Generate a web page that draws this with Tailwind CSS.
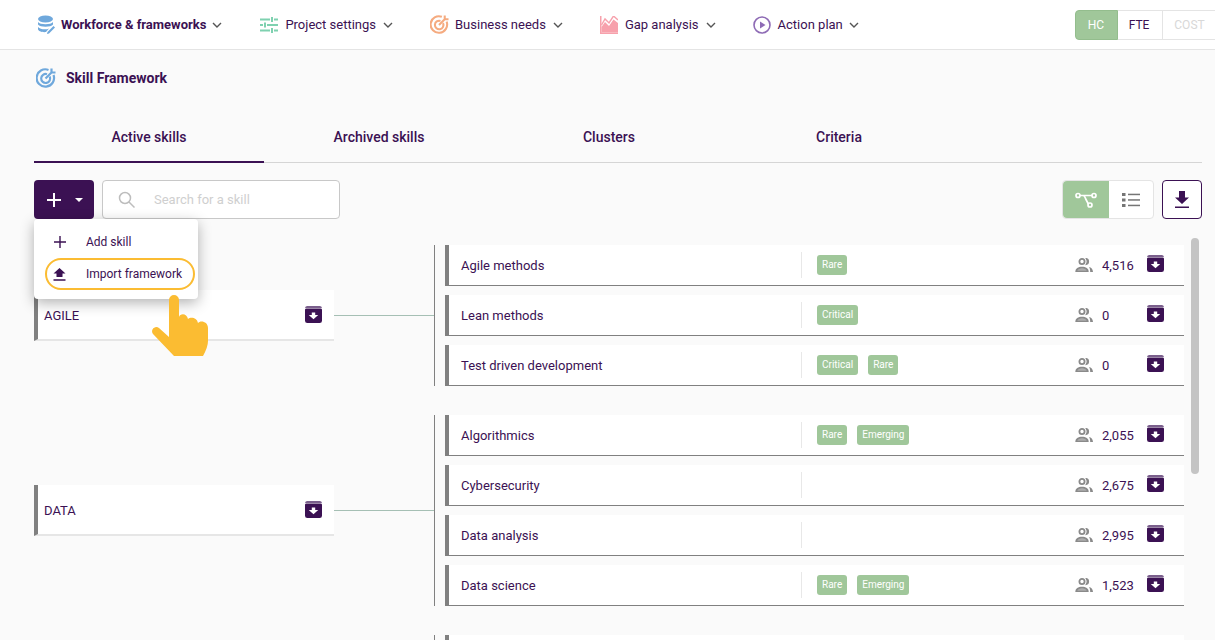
<!DOCTYPE html>
<html lang="en">

<head>
    <meta charset="UTF-8">
    <meta name="viewport" content="width=device-width, initial-scale=1.0">
    <script src="https://cdn.jsdelivr.net/npm/@tailwindcss/browser@4"></script>
    <title>Skill Framework</title>
</head>

<body class="relative h-[640px] overflow-hidden bg-[#fafafa] font-['Roboto',sans-serif] text-[13px] text-[#3b1153]">
    <!-- shared icons -->
    <svg class="hidden">
        <symbol id="archive" viewBox="0 0 18 18">
            <path d="M2.500 0h13A2.500 2.500 0 0 1 18 2H0A2.500 2.500 0 0 1 2.500 0z" fill="#7a5f8c" />
            <path d="M1.500 2.600h15A1.500 1.500 0 0 1 18 4.100V15.500a2.500 2.500 0 0 1-2.500 2.500h-13A2.500 2.500 0 0 1 0 15.500V4.100A1.500 1.500 0 0 1 1.500 2.600z" fill="#3b1153" />
            <path d="M7.200 7h3.600v2.500H14l-5 4.500-5-4.500h3.200z" fill="#fff" />
        </symbol>
        <symbol id="people" viewBox="0 0 18 14">
            <circle cx="7" cy="3.500" r="2.600" fill="none" stroke="#8a8a8a" stroke-width="1.800" />
            <path d="M11.300 .6c2.900.5 2.900 5.300 0 5.800 1.100-1.800 1.100-4 0-5.800z" fill="#8a8a8a" stroke="#8a8a8a" stroke-width="1.200" />
            <path d="M.3 14c0-3.800 3-5.200 6.700-5.200s6.700 1.400 6.700 5.200z" fill="#8a8a8a" />
            <path d="M2.300 12.800c.4-1.800 2.400-2.600 4.700-2.600s4.300.8 4.700 2.600z" fill="#fff" fill-opacity=".3" />
            <path d="M14 9c2.200.4 3.800 1.900 4 5h-2.800c0-2-.3-3.700-1.200-5z" fill="#8a8a8a" />
        </symbol>
        <symbol id="chevron" viewBox="0 0 10 6">
            <path d="M1 1l4 4 4-4" fill="none" stroke="#555" stroke-width="1.400" />
        </symbol>
    </svg>

    <!-- nav -->
    <nav class="flex h-[50px] items-center border-b border-[#e4e4e4] bg-white pl-[37px]">
        <div class="flex items-center">
            <svg class="h-[20px] w-[18px]" viewBox="0 0 18 20">
                <ellipse cx="8.500" cy="4" rx="7.500" ry="3.500" fill="#6fa8dc" />
                <path d="M1 7c2 3 13 3 15 0v2.500c-2 3-13 3-15 0z" fill="#6fa8dc" />
                <path d="M1 12c2 2.500 8 3 11 1.500l-3 3.500c-3 .5-8-.5-8-3z" fill="#6fa8dc" />
                <path d="M10.500 17l6-6 1.500 1.500-6 6-2 .5z" fill="#6fa8dc" />
            </svg>
            <span class="ml-[6px] font-bold">Workforce &amp; frameworks</span>
            <svg class="ml-[6px] h-[6px] w-[10px]"><use href="#chevron" /></svg>
        </div>
        <div class="ml-[38px] flex items-center">
            <svg class="h-[18px] w-[18px]" viewBox="0 0 18 18" fill="none" stroke="#7fd1b0" stroke-width="2">
                <path d="M0 3.500h10M14 3.500h4M12 1v5M0 9h3M7 9h11M5 6.500v5M0 14.500h10M14 14.500h4M12 12v5" />
            </svg>
            <span class="ml-[7px]">Project settings</span>
            <svg class="ml-[7px] h-[6px] w-[10px]"><use href="#chevron" /></svg>
        </div>
        <div class="ml-[37px] flex items-center">
            <svg class="h-[19px] w-[19px]" viewBox="0 0 20 20" fill="none" stroke="#f5ab80" stroke-width="2.200">
                <path d="M17.500 7A8.700 8.700 0 1 1 12.500 1.900" />
                <path d="M13.700 8.500A4.500 4.500 0 1 1 11 6.200" />
                <path d="M9.500 10.500L16 4M15.500 .5v4h4" />
            </svg>
            <span class="ml-[6px]">Business needs</span>
            <svg class="ml-[7px] h-[6px] w-[10px]"><use href="#chevron" /></svg>
        </div>
        <div class="ml-[37px] flex items-center">
            <svg class="h-[18px] w-[18px]" viewBox="0 0 18 18">
                <path d="M0 0h1.500v16.500H18V18H0z" fill="#f7a1ac" />
                <path d="M1.500 16.500V11L5 6l4 4 4.500-6.500L18 7v9.500z" fill="#f7a1ac" />
                <path d="M1.500 9L5 3l4 4 4.500-7L18 4" fill="none" stroke="#f7a1ac" stroke-width="1.400" />
            </svg>
            <span class="ml-[7px]">Gap analysis</span>
            <svg class="ml-[7px] h-[6px] w-[10px]"><use href="#chevron" /></svg>
        </div>
        <div class="ml-[37px] flex items-center">
            <svg class="h-[18px] w-[18px]" viewBox="0 0 18 18">
                <circle cx="9" cy="9" r="8" fill="none" stroke="#8e6bb5" stroke-width="1.600" />
                <path d="M7 5.500L12.500 9 7 12.500z" fill="#8e6bb5" />
            </svg>
            <span class="ml-[7px]">Action plan</span>
            <svg class="ml-[6px] h-[6px] w-[10px]"><use href="#chevron" /></svg>
        </div>
        <div class="ml-auto flex h-[30px] text-[12px]">
            <div class="flex w-[43px] items-center justify-center rounded-l-[4px] border border-[#93bd8d] bg-[#a0c79a] pr-[1px] text-white">HC</div>
            <div class="flex w-[44px] items-center justify-center border-y border-[#e4e4e4] pr-[2px]">FTE</div>
            <div class="flex w-[53px] items-center justify-center border-y border-l border-[#e4e4e4] pl-[1px] text-[#d8d8d8]">COST</div>
        </div>
    </nav>

    <main class="pl-[34px] pr-[13px]">
        <!-- title -->
        <div class="flex h-[56px] items-center pl-[2px]">
            <svg class="h-[20px] w-[20px]" viewBox="0 0 20 20" fill="none" stroke="#6fa8dc" stroke-width="2.200">
                <path d="M17.500 7A8.700 8.700 0 1 1 12.500 1.900" />
                <path d="M13.700 8.500A4.500 4.500 0 1 1 11 6.200" />
                <path d="M9.500 10.500L16 4M15.500 .5v4h4" />
            </svg>
            <h1 class="ml-[10px] text-[14px] font-bold">Skill Framework</h1>
        </div>

        <!-- tabs -->
        <div class="mt-[7px] flex h-[50px] border-b border-[#d5d5d5] text-[14px] font-medium">
            <div class="flex h-[50px] w-[230px] items-center justify-center border-b-2 border-[#3b1153]">Active skills</div>
            <div class="flex h-[49px] w-[230px] items-center justify-center">Archived skills</div>
            <div class="flex h-[49px] w-[230px] items-center justify-center">Clusters</div>
            <div class="flex h-[49px] w-[230px] items-center justify-center">Criteria</div>
        </div>

        <!-- toolbar -->
        <div class="mt-[17px] flex h-[39px]">
            <button class="flex w-[60px] items-center rounded-[4px] bg-[#3b1153] pl-[12px]">
                <svg class="h-[16px] w-[16px]" viewBox="0 0 16 16"><path d="M7 1h2v6h6v2H9v6H7V9H1V7h6z" fill="#fff" /></svg>
                <svg class="ml-[13px] h-[4px] w-[8px]" viewBox="0 0 8 4"><path d="M0 0h8L4 4z" fill="#fff" /></svg>
            </button>
            <div class="ml-[8px] flex w-[238px] items-center rounded-[4px] border border-[#c8c8c8] bg-white pl-[15px]">
                <svg class="h-[17px] w-[17px]" viewBox="0 0 17 17" fill="none" stroke="#bdbdbd" stroke-width="1.500">
                    <circle cx="7" cy="7" r="5.500" /><path d="M11 11l5.500 5.500" />
                </svg>
                <span class="ml-[19px] text-[#cfcfcf]">Search for a skill</span>
            </div>
            <div class="ml-auto flex h-[39px] w-[92px] rounded-[4px] border border-[#e4e4e4] bg-white">
                <div class="flex w-[46px] items-center justify-center rounded-l-[4px] bg-[#a0c79a]">
                    <svg class="h-[16px] w-[22px]" viewBox="0 0 22 16" fill="none" stroke="#fff" stroke-width="1.700">
                        <circle cx="3" cy="3.500" r="2" /><circle cx="19" cy="3.500" r="2" /><circle cx="15" cy="13" r="2" />
                        <path d="M5 3.500h12M8 3.500c2 0 2 2 3 4s2 4 2.500 4.500" />
                    </svg>
                </div>
                <div class="flex flex-1 items-center justify-center">
                    <svg class="h-[14px] w-[18px]" viewBox="0 0 18 14" fill="#757575">
                        <rect y="0" width="3.500" height="3" /><rect y="5.500" width="3.500" height="3" /><rect y="11" width="3.500" height="3" />
                        <rect x="6" y="0.700" width="12" height="1.500" /><rect x="6" y="6.200" width="12" height="1.500" /><rect x="6" y="11.700" width="12" height="1.500" />
                    </svg>
                </div>
            </div>
            <button class="ml-[8px] flex w-[40px] items-center justify-center rounded-[4px] border border-[#3b1153] bg-white">
                <svg class="h-[18px] w-[14px]" viewBox="0 0 14 18" fill="#3b1153"><path d="M4 0h6v6.500h4L7 13 0 6.500h4zM0 15.500h14V17H0z" /></svg>
            </button>
        </div>

        <!-- skill groups -->
        <div class="mt-[26px] flex flex-col gap-[29px]">
            <section class="flex items-center">
                <div class="flex h-[51px] w-[300px] items-center border-b-2 border-l-4 border-b-[#e6e6e6] border-l-[#808080] bg-white pl-[6px] pr-[12px]">
                    <span class="pt-[2px]">AGILE</span>
                    <svg class="mb-[1px] ml-auto h-[17px] w-[17px]"><use href="#archive" /></svg>
                </div>
                <div class="h-px w-[100px] bg-[#a5bfb4]"></div>
                <div class="flex flex-col gap-[9px] border-l border-[#808080] pl-[10px]">
                    <div class="flex h-[41px] w-[739px] items-center border-b border-l-4 border-[#808080] bg-white pl-[12px]">
                        <span class="w-[340px] pt-[2px]">Agile methods</span>
                        <div class="flex h-[26px] flex-1 items-center gap-[10px] border-l border-[#e8e8e8] pl-[15px]">
                            <span class="flex h-[20px] items-center rounded-[3px] bg-[#a0c79a] px-[5px] pb-[1px] text-[10px] text-white">Rare</span>
                        </div>
                        <svg class="h-[14px] w-[18px]"><use href="#people" /></svg>
                        <span class="ml-[9px] w-[45px] pt-[2px]">4,516</span>
                        <svg class="mb-[3px] mr-[20px] h-[17px] w-[17px]"><use href="#archive" /></svg>
                    </div>
                    <div class="flex h-[41px] w-[739px] items-center border-b border-l-4 border-[#808080] bg-white pl-[12px]">
                        <span class="w-[340px] pt-[2px]">Lean methods</span>
                        <div class="flex h-[26px] flex-1 items-center gap-[10px] border-l border-[#e8e8e8] pl-[15px]">
                            <span class="flex h-[20px] items-center rounded-[3px] bg-[#a0c79a] px-[5px] pb-[1px] text-[10px] text-white">Critical</span>
                        </div>
                        <svg class="h-[14px] w-[18px]"><use href="#people" /></svg>
                        <span class="ml-[9px] w-[45px] pt-[2px]">0</span>
                        <svg class="mb-[3px] mr-[20px] h-[17px] w-[17px]"><use href="#archive" /></svg>
                    </div>
                    <div class="flex h-[41px] w-[739px] items-center border-b border-l-4 border-[#808080] bg-white pl-[12px]">
                        <span class="w-[340px] pt-[2px]">Test driven development</span>
                        <div class="flex h-[26px] flex-1 items-center gap-[10px] border-l border-[#e8e8e8] pl-[15px]">
                            <span class="flex h-[20px] items-center rounded-[3px] bg-[#a0c79a] px-[5px] pb-[1px] text-[10px] text-white">Critical</span>
                            <span class="flex h-[20px] items-center rounded-[3px] bg-[#a0c79a] px-[5px] pb-[1px] text-[10px] text-white">Rare</span>
                        </div>
                        <svg class="h-[14px] w-[18px]"><use href="#people" /></svg>
                        <span class="ml-[9px] w-[45px] pt-[2px]">0</span>
                        <svg class="mb-[3px] mr-[20px] h-[17px] w-[17px]"><use href="#archive" /></svg>
                    </div>
                </div>
            </section>

            <section class="flex items-center">
                <div class="flex h-[51px] w-[300px] items-center border-b-2 border-l-4 border-b-[#e6e6e6] border-l-[#808080] bg-white pl-[6px] pr-[12px]">
                    <span class="pt-[2px]">DATA</span>
                    <svg class="mb-[1px] ml-auto h-[17px] w-[17px]"><use href="#archive" /></svg>
                </div>
                <div class="h-px w-[100px] bg-[#a5bfb4]"></div>
                <div class="flex flex-col gap-[9px] border-l border-[#808080] pl-[10px]">
                    <div class="flex h-[41px] w-[739px] items-center border-b border-l-4 border-[#808080] bg-white pl-[12px]">
                        <span class="w-[340px] pt-[2px]">Algorithmics</span>
                        <div class="flex h-[26px] flex-1 items-center gap-[10px] border-l border-[#e8e8e8] pl-[15px]">
                            <span class="flex h-[20px] items-center rounded-[3px] bg-[#a0c79a] px-[5px] pb-[1px] text-[10px] text-white">Rare</span>
                            <span class="flex h-[20px] items-center rounded-[3px] bg-[#a0c79a] px-[5px] pb-[1px] text-[10px] text-white">Emerging</span>
                        </div>
                        <svg class="h-[14px] w-[18px]"><use href="#people" /></svg>
                        <span class="ml-[9px] w-[45px] pt-[2px]">2,055</span>
                        <svg class="mb-[3px] mr-[20px] h-[17px] w-[17px]"><use href="#archive" /></svg>
                    </div>
                    <div class="flex h-[41px] w-[739px] items-center border-b border-l-4 border-[#808080] bg-white pl-[12px]">
                        <span class="w-[340px] pt-[2px]">Cybersecurity</span>
                        <div class="flex h-[26px] flex-1 items-center gap-[10px] border-l border-[#e8e8e8] pl-[15px]"></div>
                        <svg class="h-[14px] w-[18px]"><use href="#people" /></svg>
                        <span class="ml-[9px] w-[45px] pt-[2px]">2,675</span>
                        <svg class="mb-[3px] mr-[20px] h-[17px] w-[17px]"><use href="#archive" /></svg>
                    </div>
                    <div class="flex h-[41px] w-[739px] items-center border-b border-l-4 border-[#808080] bg-white pl-[12px]">
                        <span class="w-[340px] pt-[2px]">Data analysis</span>
                        <div class="flex h-[26px] flex-1 items-center gap-[10px] border-l border-[#e8e8e8] pl-[15px]"></div>
                        <svg class="h-[14px] w-[18px]"><use href="#people" /></svg>
                        <span class="ml-[9px] w-[45px] pt-[2px]">2,995</span>
                        <svg class="mb-[3px] mr-[20px] h-[17px] w-[17px]"><use href="#archive" /></svg>
                    </div>
                    <div class="flex h-[41px] w-[739px] items-center border-b border-l-4 border-[#808080] bg-white pl-[12px]">
                        <span class="w-[340px] pt-[2px]">Data science</span>
                        <div class="flex h-[26px] flex-1 items-center gap-[10px] border-l border-[#e8e8e8] pl-[15px]">
                            <span class="flex h-[20px] items-center rounded-[3px] bg-[#a0c79a] px-[5px] pb-[1px] text-[10px] text-white">Rare</span>
                            <span class="flex h-[20px] items-center rounded-[3px] bg-[#a0c79a] px-[5px] pb-[1px] text-[10px] text-white">Emerging</span>
                        </div>
                        <svg class="h-[14px] w-[18px]"><use href="#people" /></svg>
                        <span class="ml-[9px] w-[45px] pt-[2px]">1,523</span>
                        <svg class="mb-[3px] mr-[20px] h-[17px] w-[17px]"><use href="#archive" /></svg>
                    </div>
                </div>
            </section>

            <section class="flex items-center">
                <div class="ml-[400px] flex flex-col border-l border-[#808080] pl-[10px]">
                    <div class="h-[41px] w-[739px] border-l-4 border-[#808080] bg-white"></div>
                </div>
            </section>
        </div>
    </main>

    <!-- scrollbar -->
    <div class="absolute left-[1191px] top-[238px] h-[236px] w-[8px] rounded-[4px] bg-[#c4c4c4]"></div>

    <!-- add menu -->
    <div class="absolute left-[34px] top-[219px] h-[80px] w-[164px] rounded-[4px] bg-white shadow-[0_4px_14px_rgba(0,0,0,0.3)] text-[12px]">
        <div class="flex h-[31px] items-center pl-[20px] mt-[7px]">
            <svg class="h-[12px] w-[12px]" viewBox="0 0 12 12"><path d="M5.300 0h1.400v5.300H12v1.400H6.700V12H5.300V6.700H0V5.300h5.300z" fill="#3b1153" /></svg>
            <span class="ml-[20px]">Add skill</span>
        </div>
        <div class="mx-[11px] mt-[1px] flex h-[32px] w-[150px] items-center rounded-full border-[2.500px] border-[#fbbc32] pl-[6px]">
            <svg class="h-[13px] w-[13px]" viewBox="0 0 13 13" fill="#3b1153"><path d="M6.500 0l6 5.500H9.500V9h-6V5.500H.5zM.5 11.300h12v1.400H.5z" /></svg>
            <span class="ml-[20px]">Import framework</span>
        </div>
    </div>

    <!-- pointer hand -->
    <svg class="absolute left-[150px] top-[293px] h-[63px] w-[60px]" viewBox="0 0 60 63">
        <path d="M19 7a5 5 0 0 1 10 0V24C30 20 37 20 38 26C40 24 47 24 48 30C50 27 58 28 58 35V48Q58 54 53 63H24L3 41C0 37 5 32 9 35L19 44Z" fill="#fbbc32" />
    </svg>
</body>

</html>
